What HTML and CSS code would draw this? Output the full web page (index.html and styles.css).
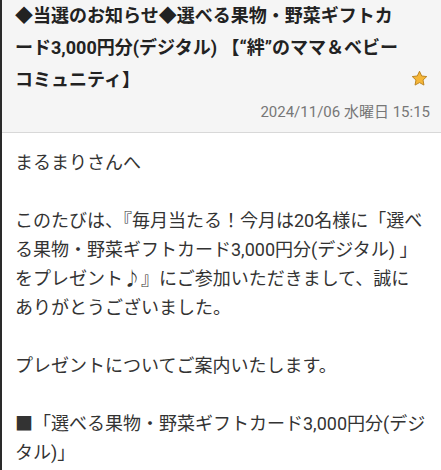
FILE: index.html
```html
<!DOCTYPE html>
<html lang="ja">
<head>
<meta charset="utf-8">
<link rel="stylesheet" href="styles.css">
</head>
<body>
<div class="page">
  <header class="head">
    <div class="head-row">
      <h1 class="title">◆当選のお知らせ◆選べる果物・野菜ギフトカード3,000円分(デジタル) 【“絆”のママ＆ベビーコミュニティ】</h1>
      <svg class="star" viewBox="0 0 24 24" width="17" height="17" aria-hidden="true">
        <path d="M12 1.8l3.1 6.6 7.1.9-5.2 4.9 1.3 7.1L12 17.8l-6.3 3.5 1.3-7.1L1.8 9.3l7.1-.9z" fill="#f5b638" stroke="#b8801a" stroke-width="1.3" stroke-linejoin="round"/>
      </svg>
    </div>
    <div class="date">2024/11/06 水曜日 15:15</div>
  </header>
  <main class="body">
    <p>まるまりさんへ</p>
    <p>このたびは、『毎月当たる！今月は20名様に「選べる果物・野菜ギフトカード3,000円分(デジタル) 」をプレゼント♪』にご参加いただきまして、誠にありがとうございました。</p>
    <p>プレゼントについてご案内いたします。</p>
    <p>■「選べる果物・野菜ギフトカード3,000円分(デジタル)」</p>
  </main>
</div>
</body>
</html>
```
FILE: styles.css
```css
html, body {
  margin: 0;
  padding: 0;
  background: #ffffff;
}
body {
  font-family: Roboto, "Noto Sans CJK JP", sans-serif;
  width: 441px;
  height: 470px;
  overflow: hidden;
}
.page {
  border-left: 2px solid #2a2a2a;
  height: 470px;
  box-sizing: border-box;
}
.head {
  background: #f5f5f5;
  border-bottom: 1px solid #d8d8d8;
  padding: 0 11px 16px 13px;
  height: 133px;
  box-sizing: border-box;
}
.head-row {
  display: flex;
  align-items: flex-end;
}
.title {
  flex: 1;
  margin: 0;
  font-size: 18px;
  line-height: 32px;
  font-weight: 700;
  color: #222222;
  width: 388px;
}
.star {
  flex: none;
  margin: 0 2px 9px 10px;
}
.date {
  text-align: right;
  font-size: 15px;
  line-height: 20px;
  color: #777777;
  margin-top: 6px;
}
.body {
  padding: 15px 15px 0 13px;
  color: #333333;
  font-size: 18px;
  line-height: 29px;
}
.body p {
  margin: 0 0 29px 0;
}
.body p:last-child {
  margin-bottom: 0;
}
```
